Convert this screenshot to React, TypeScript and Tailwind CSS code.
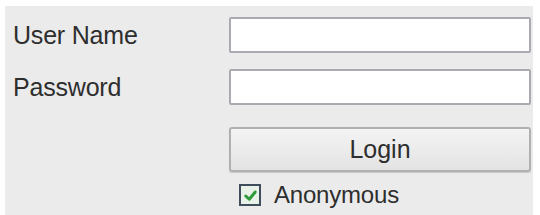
export default function App() {
  return (
    <div className="w-[540px] h-[215px] bg-white pt-[6px] pl-[5px] font-['Liberation_Sans',Arial,sans-serif] text-[#2e2e2e]">
      <div className="w-[528px] h-[209px] bg-[#ebebeb] pt-[11px] pl-[8px] flex flex-col">
        <div className="flex items-center h-[36px]">
          <span className="w-[216px] text-[25px] leading-none tracking-[-0.2px]">User Name</span>
          <input
            type="text"
            className="w-[302px] h-[36px] bg-white border-2 border-[#a9abb0] rounded-[2px] outline-none"
          />
        </div>
        <div className="flex items-center h-[36px] mt-[16px]">
          <span className="w-[216px] text-[25px] leading-none tracking-[-0.2px]">Password</span>
          <input
            type="password"
            className="w-[302px] h-[36px] bg-white border-2 border-[#a9abb0] rounded-[2px] outline-none"
          />
        </div>
        <div className="flex mt-[22px] pl-[216px]">
          <button className="w-[302px] h-[45px] rounded-[3px] border-2 border-[#b0b0b0] bg-gradient-to-b from-[#f4f4f4] to-[#e3e3e3] text-[25px] leading-none text-[#2e2e2e] shadow-[0_1px_1px_rgba(0,0,0,0.15)]">
            Login
          </button>
        </div>
        <div className="flex items-center mt-[11px] pl-[226px] gap-[13px]">
          <span className="w-[22px] h-[22px] border-2 border-[#3f4d5c] bg-[#e8f2e8] flex items-center justify-center">
            <svg viewBox="0 0 12 12" className="w-[15px] h-[15px]">
              <path d="M2.2 6.4 L5 9 L9.8 3.2" fill="none" stroke="#2e9a3a" strokeWidth="2.4" strokeLinecap="round" strokeLinejoin="round" />
            </svg>
          </span>
          <span className="text-[24px] leading-none tracking-[-0.2px]">Anonymous</span>
        </div>
      </div>
    </div>
  );
}
